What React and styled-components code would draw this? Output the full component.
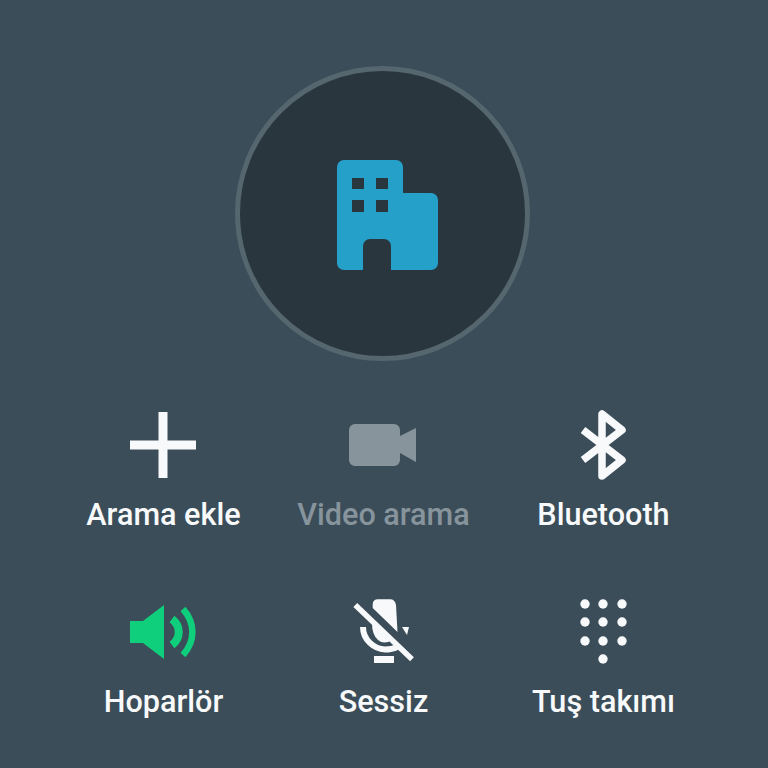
import React from 'react'
import styled, { createGlobalStyle } from 'styled-components'

const GlobalStyle = createGlobalStyle`
  html, body {
    margin: 0;
    padding: 0;
    background: #3b4d59;
  }
`

const Screen = styled.div`
  width: 768px;
  height: 768px;
  overflow: hidden;
  display: flex;
  flex-direction: column;
  align-items: center;
  padding-top: 66px;
  box-sizing: border-box;
  background: #3b4d59;
  font-family: 'Roboto', sans-serif;
`

const Avatar = styled.div`
  flex: none;
  width: 295px;
  height: 295px;
  margin-left: -3px;
  padding: 2px 0 0 10px;
  box-sizing: border-box;
  border: 5px solid #56666f;
  border-radius: 50%;
  background: #29363e;
  display: flex;
  align-items: center;
  justify-content: center;
`

const Actions = styled.div`
  flex: none;
  display: grid;
  grid-template-columns: repeat(3, 220px);
  grid-auto-rows: 187px;
  margin-top: 44px;
  margin-left: -1px;
`

const Action = styled.div`
  display: flex;
  flex-direction: column;
  align-items: center;
  color: ${props => props.disabled ? '#87949c' : '#f7f9fa'};
`

const IconBox = styled.div`
  width: 80px;
  height: 80px;
  margin-left: -2px;
  display: flex;
  align-items: center;
  justify-content: center;
`

const Label = styled.span`
  margin-top: 13px;
  font-size: 30.6px;
  font-weight: 500;
  line-height: 34px;
  white-space: nowrap;
`

const BuildingIcon = () => (
  <svg width="101" height="110" viewBox="0 0 101 110">
    <path
      fill="#25a0c9"
      fillRule="evenodd"
      d="M7 0H59a7 7 0 0 1 7 7V33H94a7 7 0 0 1 7 7V103a7 7 0 0 1-7 7H54V86a7 7 0 0 0-7-7H33a7 7 0 0 0-7 7V110H7a7 7 0 0 1-7-7V7a7 7 0 0 1 7-7Z
      M15 18V29H27V18Z M39 18V29H51V18Z M15 40V52H27V40Z M39 40V52H51V40Z"
    />
  </svg>
)

const PlusIcon = () => (
  <svg width="66" height="66" viewBox="0 0 66 66" fill="currentColor">
    <rect x="28.5" y="0" width="9" height="66" />
    <rect x="0" y="28.5" width="66" height="9" />
  </svg>
)

const VideoIcon = () => (
  <svg width="67" height="42" viewBox="0 0 67 42" fill="currentColor">
    <path d="M6 0H45a6 6 0 0 1 6 6V12L67 4V38L51 29V36a6 6 0 0 1-6 6H6a6 6 0 0 1-6-6V6a6 6 0 0 1 6-6Z" />
  </svg>
)

const BluetoothIcon = () => (
  <svg width="50" height="70" viewBox="0 0 50 70" fill="none" stroke="currentColor" strokeWidth="7.5" strokeLinejoin="round" strokeLinecap="butt">
    <path d="M5 50 L44 20 L24 4 V66 L44 50 L5 20" />
  </svg>
)

const SpeakerIcon = () => (
  <svg width="66" height="54" viewBox="0 0 66 54" fill="none">
    <path fill="#10cf7c" d="M0 16H13L34 0V54L13 38H0Z" />
    <path stroke="#10cf7c" strokeWidth="8" d="M42 14C51 21 51 33 42 40" />
    <path stroke="#10cf7c" strokeWidth="6.5" d="M53 4C65.5 18 65.5 36 53 50" />
  </svg>
)

const MicOffIcon = () => (
  <svg width="64" height="68" viewBox="0 0 64 68" fill="none">
    <path fill="currentColor" d="M21.7 10V6Q22 1.3 27 1.3H39Q44 1.3 45 7L46.5 34Z" />
    <path fill="currentColor" d="M21 25L41 42Q33 47 27 42Q21 37 21 25Z" />
    <path fill="currentColor" d="M51 29H58L56 37Z" />
    <path stroke="currentColor" strokeWidth="6" d="M12 29C12 42 23 51 34 51.5C38 51.5 42 51 46 49" />
    <rect x="23" y="58" width="20" height="7" fill="currentColor" />
    <path stroke="currentColor" strokeWidth="5.5" d="M4.3 7L61 61.3" />
  </svg>
)

const KeypadIcon = () => (
  <svg width="50" height="66" viewBox="0 0 50 66" fill="currentColor">
    {[5, 23, 42].map(cy => [7, 25, 44].map(cx => (
      <circle key={`${cx}-${cy}`} cx={cx} cy={cy} r="4.7" />
    )))}
    <circle cx="25" cy="60" r="4.7" />
  </svg>
)

const actions = [
  { label: 'Arama ekle', icon: <PlusIcon /> },
  { label: 'Video arama', icon: <VideoIcon />, disabled: true },
  { label: 'Bluetooth', icon: <BluetoothIcon /> },
  { label: 'Hoparlör', icon: <SpeakerIcon /> },
  { label: 'Sessiz', icon: <MicOffIcon /> },
  { label: 'Tuş takımı', icon: <KeypadIcon /> }
]

const App = () => (
  <Screen>
    <GlobalStyle />
    <Avatar>
      <BuildingIcon />
    </Avatar>
    <Actions>
      {actions.map(action => (
        <Action key={action.label} disabled={action.disabled}>
          <IconBox>{action.icon}</IconBox>
          <Label>{action.label}</Label>
        </Action>
      ))}
    </Actions>
  </Screen>
)

export default App
